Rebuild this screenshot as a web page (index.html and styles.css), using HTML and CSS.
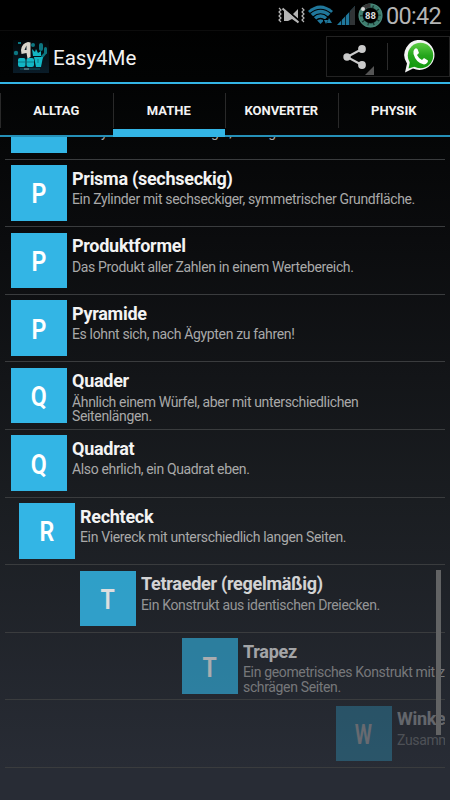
FILE: index.html
```html
<!DOCTYPE html>
<html lang="de">
<head>
    <meta charset="UTF-8">
    <title>Easy4Me</title>
    <link rel="stylesheet" href="styles.css">
</head>
<body>

<div class="status-bar">
    <svg class="vibrate" width="27" height="19" viewBox="0 0 27 19">
        <path d="M1 2l2 2-2 2 2 2-2 2 2 2-2 2 2 2M24 2l2 2-2 2 2 2-2 2 2 2-2 2 2 2" fill="none" stroke="#b4b4b4" stroke-width="1.200"/>
        <path d="M6 5h3l5 4 6-6v14l-6-4-4 2H6z" fill="#b4b4b4"/>
        <path d="M6 1.500l16 14" stroke="#000" stroke-width="2"/>
        <path d="M4.500 2.500l16 14" stroke="#b4b4b4" stroke-width="2"/>
    </svg>
    <svg class="wifi" width="26" height="20" viewBox="0 0 26 20">
        <path d="M0 6Q12 -5 25 6L12.500 19z" fill="#20779b"/>
        <path d="M2 8.500Q12.500 0 23 8.500M5 12Q12.500 5.500 20 12M8 15.500Q12.500 11.500 17 15.500" fill="none" stroke="#000" stroke-width="1.200"/>
        <path d="M15 20v-6h10v6z" fill="#000"/>
        <path d="M16 15h4l-2 4zM19 18l2-5 3 5z" fill="#20779b"/>
    </svg>
    <svg class="signal" width="18" height="19" viewBox="0 0 18 19">
        <path d="M0 19L18 0v19z" fill="#20779b"/>
        <path d="M13 5.300L18 0v19h-5z" fill="#303436"/>
        <path d="M4.500 12v7M8.500 8v11M12.500 4v15" stroke="#000" stroke-width="0.700"/>
    </svg>
    <svg class="battery" width="25" height="25" viewBox="0 0 25 25">
        <circle cx="12.500" cy="12.500" r="9.800" fill="none" stroke="#17342e" stroke-width="4.400"/>
        <circle cx="12.500" cy="12.500" r="11.300" fill="none" stroke="#4a8a7b" stroke-width="1.400"/>
        <circle cx="12.500" cy="12.500" r="9.500" fill="none" stroke="#3f7f70" stroke-width="3" stroke-dasharray="4.800 1.170"/>
        <path d="M4.500 6.500A10 10 0 0 1 12.500 2.500" fill="none" stroke="#383838" stroke-width="4"/>
        <circle cx="5" cy="6" r="2" fill="#ddd"/>
        <text x="12.500" y="16" text-anchor="middle" class="battery-text">88</text>
    </svg>
    <span class="clock">00:42</span>
</div>

<header class="action-bar">
    <svg class="logo" width="36" height="33" viewBox="0 0 36 33">
        <defs>
            <linearGradient id="logoBg" x1="0" y1="0" x2="0" y2="1">
                <stop offset="0" stop-color="#020608"/>
                <stop offset="1" stop-color="#0a1c28"/>
            </linearGradient>
        </defs>
        <rect width="36" height="33" fill="url(#logoBg)"/>
        <g fill="#0c7681">
            <circle cx="3" cy="13" r="2.200"/>
            <circle cx="20" cy="5" r="2"/>
            <rect x="26" y="3" width="4" height="8" rx="2"/>
            <rect x="31" y="7" width="3" height="7" rx="1.500"/>
            <rect x="5" y="2" width="3" height="2"/>
            <path d="M28 16l5-5 1 2-5 6z"/>
        </g>
        <g fill="#12b6c4">
            <rect x="5" y="18" width="7.500" height="9" rx="2"/>
            <rect x="13.500" y="18" width="7.500" height="9" rx="2"/>
            <path d="M21 17h9l-2 10h-5z"/>
            <path d="M19 9l3 3 1-3 2 4 3-2v5h-8z"/>
        </g>
        <path d="M5 22h7M14 22h7M25 19v4" stroke="#087b87" stroke-width="1" fill="none"/>
        <path d="M15 2l2.500 0.500V17l-3 1.500-1-5.500-5 1-0.500-4Q9 3 15 2z" fill="#d9d6cc"/>
        <path d="M13.500 5.500v4.500h-2z" fill="#0a1c28"/>
        <path d="M7 29h20" stroke="#0c4552" stroke-width="1.500"/>
        <path d="M11 29h5" stroke="#8aa0a4" stroke-width="1"/>
    </svg>
    <h1>Easy4Me</h1>
    <div class="share">
        <div class="share-btn">
            <svg width="33" height="34" viewBox="0 0 33 34">
                <path d="M20 6L5 14l15 8" fill="none" stroke="#cacaca" stroke-width="2"/>
                <circle cx="5" cy="14" r="3.700" fill="#cacaca"/>
                <circle cx="20" cy="6" r="3.900" fill="#cacaca"/>
                <circle cx="20" cy="22" r="3.900" fill="#cacaca"/>
                <path d="M32 23v9h-9z" fill="#555"/>
            </svg>
        </div>
        <svg class="whatsapp" width="32" height="33" viewBox="0 0 32 33">
            <defs>
                <linearGradient id="waBg" x1="0" y1="0" x2="0" y2="1">
                    <stop offset="0" stop-color="#5fce46"/>
                    <stop offset="0.500" stop-color="#25a51c"/>
                    <stop offset="1" stop-color="#159a10"/>
                </linearGradient>
            </defs>
            <path d="M16.500 0A15 15 0 1 1 9 28.500L1 32.500l2-9A15 15 0 0 1 16.500 0z" fill="#f4f4f4"/>
            <circle cx="16.500" cy="15.500" r="12.700" fill="url(#waBg)"/>
            <path d="M4.500 28.500l1.500-7 5 5z" fill="#159a10"/>
            <path d="M9.500 11q1.500-4 4-2l1.500 4-2 2q2 4 5 5l2-2 4 2.500q0 3-4 4Q12 23 9.500 14z" fill="#fff"/>
        </svg>
    </div>
</header>

<nav class="tabs">
    <div class="tab">ALLTAG</div>
    <div class="tab active">MATHE</div>
    <div class="tab">KONVERTER</div>
    <div class="tab">PHYSIK</div>
</nav>

<main class="list">
    <div class="row">
        <div class="tile"><span>P</span></div>
        <div class="text">
            <h2>Prisma (dreieckig)</h2>
            <p>Ein Zylinder mit dreieckiger, winkliger Fläche.</p>
        </div>
    </div>
    <div class="row">
        <div class="tile"><span>P</span></div>
        <div class="text">
            <h2>Prisma (sechseckig)</h2>
            <p>Ein Zylinder mit sechseckiger, symmetrischer Grundfläche.</p>
        </div>
    </div>
    <div class="row">
        <div class="tile"><span>P</span></div>
        <div class="text">
            <h2>Produktformel</h2>
            <p>Das Produkt aller Zahlen in einem Wertebereich.</p>
        </div>
    </div>
    <div class="row">
        <div class="tile"><span>P</span></div>
        <div class="text">
            <h2>Pyramide</h2>
            <p>Es lohnt sich, nach Ägypten zu fahren!</p>
        </div>
    </div>
    <div class="row">
        <div class="tile"><span>Q</span></div>
        <div class="text">
            <h2>Quader</h2>
            <p>Ähnlich einem Würfel, aber mit unterschiedlichen<br>Seitenlängen.</p>
        </div>
    </div>
    <div class="row">
        <div class="tile"><span>Q</span></div>
        <div class="text">
            <h2>Quadrat</h2>
            <p>Also ehrlich, ein Quadrat eben.</p>
        </div>
    </div>
    <div class="row slide-1">
        <div class="tile"><span>R</span></div>
        <div class="text">
            <h2>Rechteck</h2>
            <p>Ein Viereck mit unterschiedlich langen Seiten.</p>
        </div>
    </div>
    <div class="row slide-2">
        <div class="tile"><span>T</span></div>
        <div class="text">
            <h2>Tetraeder (regelmäßig)</h2>
            <p>Ein Konstrukt aus identischen Dreiecken.</p>
        </div>
    </div>
    <div class="row slide-3">
        <div class="tile"><span>T</span></div>
        <div class="text">
            <h2>Trapez</h2>
            <p>Ein geometrisches Konstrukt mit zwei<br>schrägen Seiten.</p>
        </div>
    </div>
    <div class="row slide-4">
        <div class="tile"><span>W</span></div>
        <div class="text">
            <h2>Winkel</h2>
            <p>Zusammenhänge</p>
        </div>
    </div>
    <div class="scrollbar"></div>
</main>

</body>
</html>
```

FILE: styles.css
```css
* {
    box-sizing: border-box;
}

body {
    margin: 0;
    width: 450px;
    height: 800px;
    overflow: hidden;
    display: flex;
    flex-direction: column;
    font-family: Roboto, sans-serif;
    color: #f3f3f3;
    background: linear-gradient(#000 0, #020303 80px, #0b0c0e 240px, #1a1d21 500px, #282c35 770px, #282c35 800px);
}

h1, h2, p {
    margin: 0;
}

.status-bar {
    height: 31px;
    flex: none;
    display: flex;
    align-items: center;
    justify-content: flex-end;
    padding-right: 9px;
    background: #000;
    border-bottom: 1px solid #0c0c0c;
}

.wifi {
    margin-left: 3px;
}

.signal {
    margin-left: 3px;
}

.battery {
    margin-left: 3px;
}

.battery-text {
    font-size: 9.500px;
    font-weight: bold;
    fill: #ddd;
}

.clock {
    margin-left: 3px;
    font-size: 23.500px;
    letter-spacing: -0.700px;
    line-height: 30px;
    padding-top: 2px;
    color: #b4b4b4;
}

.action-bar {
    height: 53px;
    flex: none;
    display: flex;
    align-items: center;
    padding-left: 13px;
    border-bottom: 2px solid #33b5e5;
}

.action-bar h1 {
    margin-left: 4px;
    font-size: 20.500px;
    font-weight: normal;
    padding-top: 2px;
}

.share {
    width: 124px;
    height: 41px;
    margin-left: auto;
    display: flex;
    align-items: center;
    border: 1px solid #232323;
}

.share-btn {
    width: 61px;
    height: 27px;
    display: flex;
    align-items: center;
    padding-left: 15px;
    border-right: 1px solid #2c2c2c;
}

.share-btn svg {
    margin-top: 6px;
}

.whatsapp {
    margin-left: 16px;
}

.tabs {
    height: 53px;
    flex: none;
    display: flex;
}

.tab {
    flex: 1;
    text-align: center;
    font-size: 13px;
    font-weight: bold;
    line-height: 53px;
    border-bottom: 2px solid #2590b8;
    background: linear-gradient(#292929, #292929) 0 9px / 1px 35px no-repeat;
}

.tab.active {
    border-bottom: 8px solid #33b5e5;
}

.list {
    flex: 1;
    position: relative;
    overflow: hidden;
    padding: 0 5px;
}

.row {
    height: 67.600px;
    display: flex;
    padding: 5.500px 0 0 6px;
    overflow: hidden;
    border-bottom: 1px solid #3a3c3e;
}

.row:first-child {
    margin-top: -45px;
}

.tile {
    width: 55.500px;
    height: 55.500px;
    flex: none;
    display: flex;
    align-items: center;
    justify-content: center;
    font-size: 28px;
    font-weight: 600;
    color: #fff;
    background: #33b5e5;
}

.tile span {
    display: block;
    padding-top: 2px;
    transform: scaleX(0.83);
}

.text {
    flex: none;
    padding: 2.500px 0 0 5.500px;
    white-space: nowrap;
}

.text h2 {
    font-size: 18px;
    font-weight: bold;
    letter-spacing: -0.280px;
    line-height: 21px;
}

.text p {
    margin-top: 3.500px;
    font-size: 14px;
    letter-spacing: -0.350px;
    line-height: 14.500px;
    color: #a9a9a9;
}

/* rows sliding in from the right */
.slide-1 {
    padding-left: 14px;
}

.slide-2 {
    padding-left: 75px;
}

.slide-3 {
    padding-left: 177px;
}

.slide-4 {
    padding-left: 331px;
}

.slide-2 .tile, .slide-2 .text {
    opacity: 0.85;
}

.slide-3 .tile, .slide-3 .text {
    opacity: 0.62;
}

.slide-4 .tile, .slide-4 .text {
    opacity: 0.3;
}

.slide-4 .tile span {
    transform: scaleX(0.7);
}

.scrollbar {
    position: absolute;
    right: 9px;
    top: 433px;
    width: 5px;
    height: 165px;
    background: #626364;
}
```
